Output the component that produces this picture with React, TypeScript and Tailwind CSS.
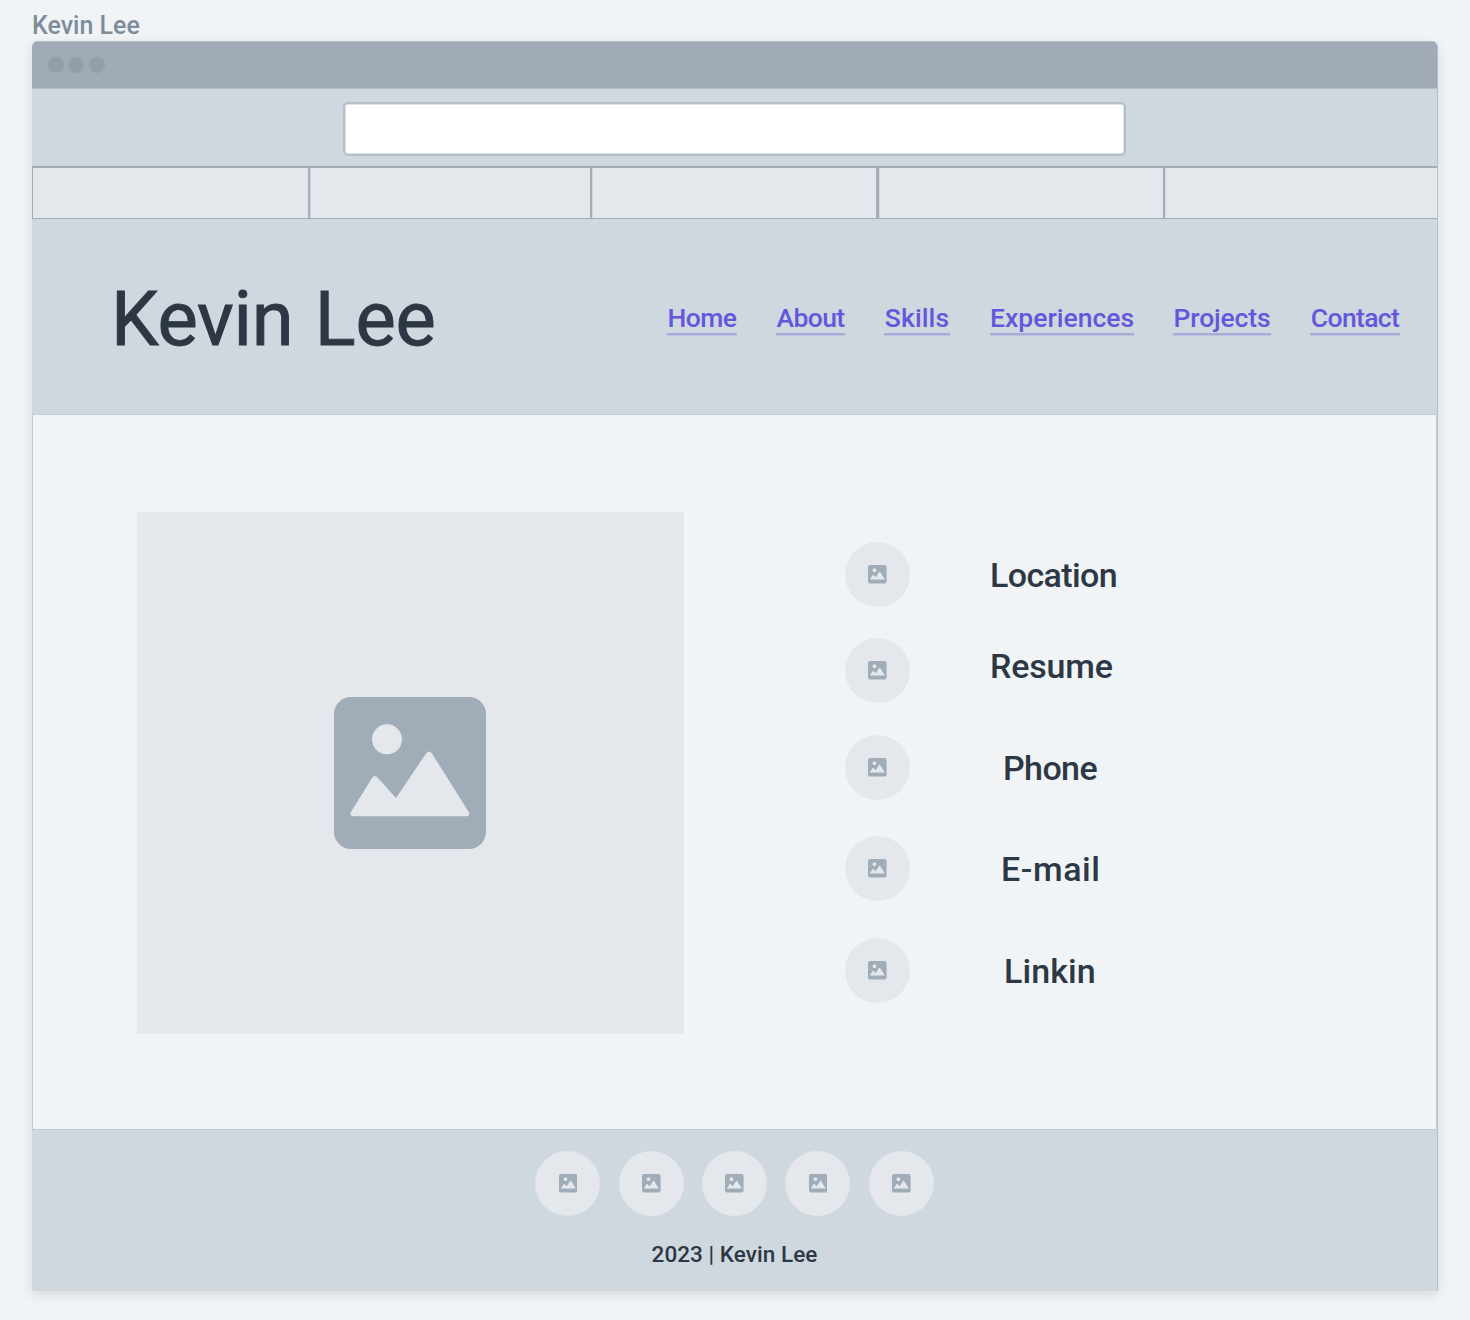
function Picture({ className }: { className: string }) {
  return (
    <svg viewBox="0 0 152 152" className={className} aria-hidden="true">
      <rect width="152" height="152" rx="17" fill="#a0acb8" />
      <circle cx="53" cy="42.3" r="15" fill="#e4e7ec" />
      <path
        d="M16.600 115.400 L38 81 Q41 77.200 44 81 L62 101 L92.200 56.200 Q95 53 97.800 56.200 L135 115.400 Q136.300 118.800 133 119.300 H18.800 Q15.600 118.800 16.600 115.400 Z"
        fill="#e4e7ec"
      />
    </svg>
  );
}

function Avatar() {
  return (
    <div className="flex size-[65px] shrink-0 items-center justify-center rounded-full bg-[#e4e7ec]">
      <Picture className="ml-[0.4px] size-[18.6px]" />
    </div>
  );
}

const links = [
  { text: 'Home', style: 'w-[70px] tracking-[-0.5px]' },
  { text: 'About', style: 'w-[69px] ml-[39px] tracking-[-0.6px]' },
  { text: 'Skills', style: 'w-[66px] ml-[39px] tracking-[0.1px]' },
  { text: 'Experiences', style: 'w-[144px] ml-[40px] tracking-[0px]' },
  { text: 'Projects', style: 'w-[98px] ml-[39px] tracking-[-0.15px]' },
  { text: 'Contact', style: 'w-[90px] ml-[39px] tracking-[-0.65px]' },
];

const contacts = [
  { text: 'Location', row: '', style: 'pl-[80px] pt-[1px] tracking-[-0.6px]' },
  { text: 'Resume', row: 'mt-[31px]', style: 'pl-[80px] pb-[9px] tracking-[-0.2px]' },
  { text: 'Phone', row: 'mt-[32px]', style: 'pl-[93px] pt-[1px] tracking-[-0.6px]' },
  { text: 'E-mail', row: 'mt-[36px]', style: 'pl-[91px] pt-[1px] tracking-[0.6px]' },
  { text: 'Linkin', row: 'mt-[37px]', style: 'pl-[94px] pt-[1px] tracking-[0.1px]' },
];

const tabs = [
  'w-[277px] border-r-2',
  'w-[282px] border-r-2',
  'w-[287px] border-r-[3px]',
  'w-[286px] border-r-2',
];

export default function App() {
  return (
    <div className="h-[1320px] w-[1470px] overflow-hidden bg-[#f0f4f7] pl-8 font-['Roboto',sans-serif] font-medium text-[#2d3844]">
      <div className="h-[41px] pt-[11px] text-[25px] leading-[30px] whitespace-nowrap text-[#7f8c9a]">Kevin Lee</div>
      <div className="flex h-[1250px] w-[1406px] flex-col overflow-hidden rounded-t-md border-r border-[#b8c1ca] bg-[#cfd7df] shadow-[0_4px_12px_rgba(60,70,80,0.14)]">
        <div className="flex h-[48px] shrink-0 items-center gap-[4.8px] border-y border-t-[#b9c2ca] border-b-[#b3bdc8] bg-[#a0abb7] pl-[15.5px]">
          <span className="size-4 rounded-full bg-[#929eaa]" />
          <span className="size-4 rounded-full bg-[#929eaa]" />
          <span className="size-4 rounded-full bg-[#929eaa]" />
        </div>
        <div className="flex h-[77px] shrink-0 justify-center pt-[13px]">
          <div className="h-[54px] w-[783px] rounded-[5px] border-2 border-[#b5bfcb] bg-white shadow-[inset_0_0_0_1px_#dde2e9]" />
        </div>
        <div className="flex h-[53px] shrink-0 border-t-2 border-b border-l border-[#a0acb8] bg-[#e4e7ec]">
          {tabs.map((tab, i) => (
            <div key={i} className={`${tab} shrink-0 border-[#a3aeb9] shadow-[1px_0_0_#d0d7df]`} />
          ))}
        </div>
        <header className="flex h-[196px] shrink-0 justify-between border-b border-[#c6cfd8] pr-[37px] pl-[79px]">
          <h1 className="pt-[55px] text-[76px] leading-[90px] font-normal tracking-[-0.3px] whitespace-nowrap [-webkit-text-stroke:0.9px_#2d3844] [word-spacing:3px]">
            Kevin Lee
          </h1>
          <nav className="flex pt-[84px] text-[26.5px] leading-[29px] text-[#6358dd]">
            {links.map((link) => (
              <a
                key={link.text}
                className={`${link.style} h-[32px] border-b-2 border-[#a9a9dc] text-center whitespace-nowrap shadow-[0_1px_0_#c0c3dd]`}
              >
                {link.text}
              </a>
            ))}
          </nav>
        </header>
        <main className="flex h-[714px] shrink-0 border-r border-l border-[#c3ccd6] bg-[#f0f4f7] pt-[97px] pl-[104px]">
          <div className="flex h-[522px] w-[547px] shrink-0 items-center justify-center bg-[#e4e7ec] pr-[2px]">
            <Picture className="size-[152px]" />
          </div>
          <div className="flex flex-col pt-[30px] pl-[161px] text-[34px] leading-[40px]">
            {contacts.map((item) => (
              <div key={item.text} className={`${item.row} flex h-[65px] items-center`}>
                <Avatar />
                <span className={`${item.style} whitespace-nowrap`}>{item.text}</span>
              </div>
            ))}
          </div>
        </main>
        <footer className="flex h-[162px] shrink-0 flex-col items-center border-t border-[#c0cad5] pt-[21px]">
          <div className="flex gap-[18.4px]">
            <Avatar />
            <Avatar />
            <Avatar />
            <Avatar />
            <Avatar />
          </div>
          <p className="mt-[24px] text-[22.5px] leading-[28px] tracking-[0.05px] whitespace-nowrap">2023 | Kevin Lee</p>
        </footer>
      </div>
    </div>
  );
}
